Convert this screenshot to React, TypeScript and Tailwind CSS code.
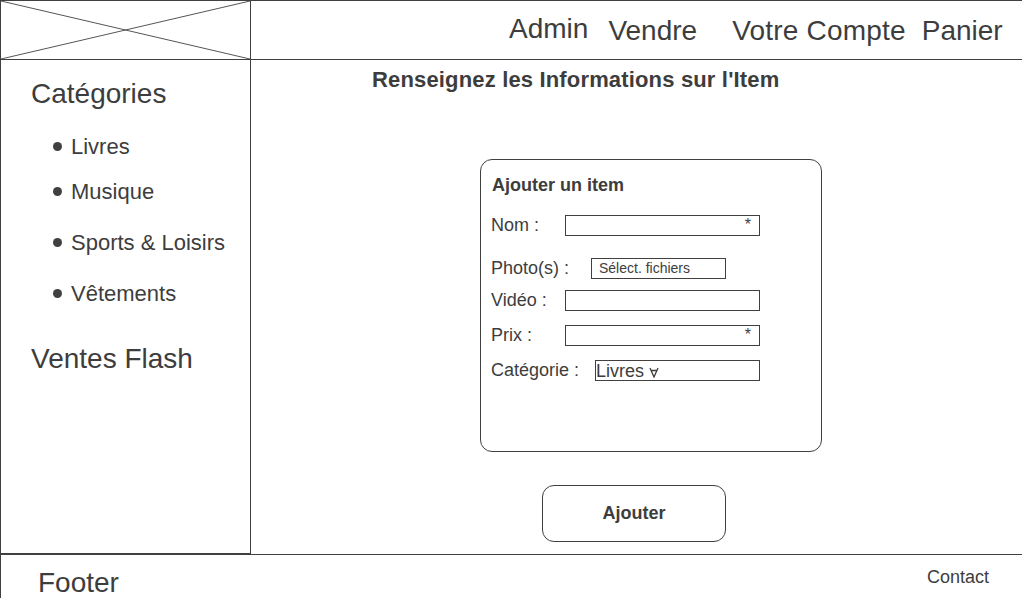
const categories = [
  { label: 'Livres', mt: 'mt-[24px]' },
  { label: 'Musique', mt: 'mt-[20px]' },
  { label: 'Sports & Loisirs', mt: 'mt-[26px]' },
  { label: 'Vêtements', mt: 'mt-[26px]' }
];

const Asterisk = () => (
  <span className="ml-auto pr-[8px] text-[16px] leading-none">*</span>
);

const App = () => {
  return (
    <div className="w-[1022px] h-[598px] overflow-hidden bg-white text-[#3d3d3d] font-['Liberation_Sans',Arial,sans-serif]">
      {/* header */}
      <div className="flex h-[60px] border-t border-b border-l border-[#404040]">
        <div className="w-[250px] h-full border-r border-[#404040]">
          <svg className="w-full h-full" viewBox="0 0 249 58" preserveAspectRatio="none">
            <line x1="0" y1="0" x2="249" y2="58" stroke="#555" strokeWidth="1" />
            <line x1="0" y1="58" x2="249" y2="0" stroke="#555" strokeWidth="1" />
          </svg>
        </div>
        <nav className="flex items-start pt-[12px] text-[28px] leading-[32px]">
          <span className="ml-[258px]">Admin</span>
          <span className="ml-[20px] mt-[2px]">Vendre</span>
          <span className="ml-[35px] mt-[2px] tracking-[0.2px]">Votre Compte</span>
          <span className="ml-[16px] mt-[2px]">Panier</span>
        </nav>
      </div>

      {/* body */}
      <div className="flex h-[494px]">
        <aside className="w-[251px] border-l border-r border-b border-[#404040] pl-[30px] pt-[18px]">
          <p className="text-[28px] leading-[32px]">Catégories</p>
          <ul>
            {categories.map((c) => (
              <li
                key={c.label}
                className={`${c.mt} flex items-center text-[22px] leading-[25px]`}
              >
                <span className="ml-[22px] mr-[9px] h-[9px] w-[9px] rounded-full bg-[#404040]" />
                {c.label}
              </li>
            ))}
          </ul>
          <p className="mt-[37px] text-[28px] leading-[32px]">Ventes Flash</p>
        </aside>

        <main className="flex-1 flex flex-col pt-[7px]">
          <h1 className="pl-[121px] text-[22px] leading-[25px] font-bold tracking-[0.16px]">
            Renseignez les Informations sur l'Item
          </h1>

          <div className="ml-[229px] mt-[67px] w-[342px] h-[293px] rounded-[12px] border border-[#404040] px-[10px] pt-[15px] text-[18px] leading-[21px]">
            <h2 className="h-[21px] overflow-hidden pl-[1px] font-bold">Ajouter un item</h2>

            <div className="mt-[18px] flex h-[22px] items-center">
              <span className="w-[74px]">Nom :</span>
              <div className="flex h-[21px] w-[195px] items-center border border-[#404040]">
                <Asterisk />
              </div>
            </div>

            <div className="mt-[21px] flex h-[22px] items-center">
              <span className="w-[100px]">Photo(s) :</span>
              <div className="flex h-[21px] w-[135px] items-center border border-[#404040] pl-[7px] text-[14px]">
                Sélect. fichiers
              </div>
            </div>

            <div className="mt-[10px] flex h-[22px] items-center">
              <span className="w-[74px]">Vidéo :</span>
              <div className="h-[21px] w-[195px] border border-[#404040]" />
            </div>

            <div className="mt-[13px] flex h-[22px] items-center">
              <span className="w-[74px]">Prix :</span>
              <div className="flex h-[21px] w-[195px] items-center border border-[#404040]">
                <Asterisk />
              </div>
            </div>

            <div className="mt-[13px] flex h-[22px] items-center">
              <span className="w-[104px]">Catégorie :</span>
              <div className="flex h-[21px] w-[165px] items-center border border-[#404040] pt-[2px]">
                <span>Livres</span>
                <svg className="ml-[5px] mt-[2px]" width="10" height="11" viewBox="0 0 10 11">
                  <path d="M1 1 L5 10 L9 1 M1.5 3.5 H8.5" fill="none" stroke="#3d3d3d" strokeWidth="1.3" />
                </svg>
              </div>
            </div>
          </div>

          <button className="ml-[291px] mt-[33px] flex h-[57px] w-[184px] items-center justify-center rounded-[12px] border border-[#404040] text-[18px] font-bold">
            Ajouter
          </button>
        </main>
      </div>

      {/* footer */}
      <footer className="flex h-[44px] border-t border-l border-[#404040]">
        <span className="pl-[37px] pt-[12px] text-[28px] leading-[32px]">Footer</span>
        <span className="ml-auto pr-[33px] pt-[12px] text-[18px] leading-[21px]">Contact</span>
      </footer>
    </div>
  );
};

export default App;
